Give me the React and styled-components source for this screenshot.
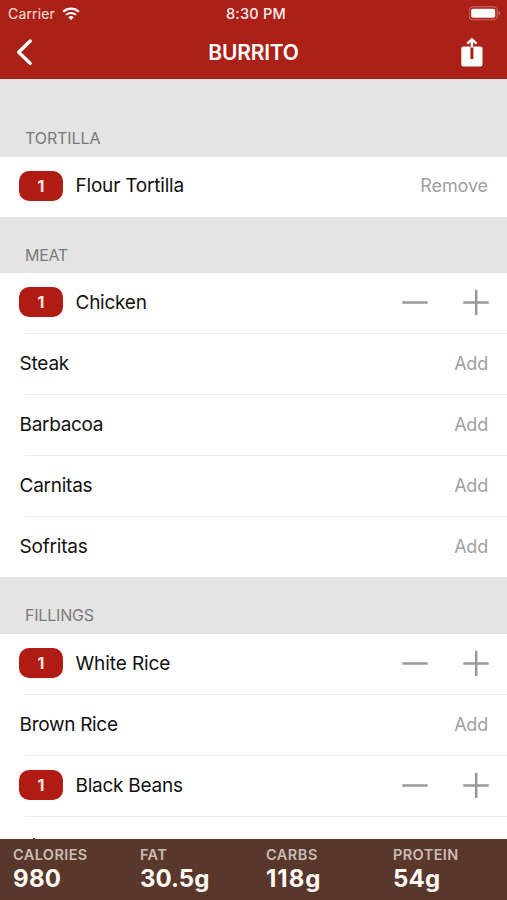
import React, { useState } from "react";
import styled, { createGlobalStyle } from "styled-components";

const GlobalStyle = createGlobalStyle`
  * {
    box-sizing: border-box;
  }
  body {
    margin: 0;
    background-color: #ffffff;
    font-family: Inter, "Liberation Sans", sans-serif;
  }
`;

//
const Screen = styled.div`
  width: 100%;
  height: 100vh;
  display: flex;
  flex-direction: column;
  overflow: hidden;
`;
const Header = styled.header`
  flex: none;
  height: 79px;
  background-color: #ab2118;
  color: #ffffff;
`;
const StatusBar = styled.div`
  height: 27px;
  display: grid;
  grid-template-columns: 1fr auto 1fr;
  align-items: center;
  padding: 0 6px 0 8px;
  font-size: 14px;
  line-height: 27px;
  color: #fbe3dd;
`;
const Carrier = styled.div`
  display: flex;
  align-items: center;
  gap: 7px;
  letter-spacing: 0.15px;
`;
const Clock = styled.div`
  padding-left: 3px;
  font-size: 14.5px;
  font-weight: 500;
  letter-spacing: 0.25px;
  color: #ffeeea;
`;
const Battery = styled.svg`
  justify-self: end;
`;
const NavBar = styled.div`
  height: 52px;
  display: grid;
  grid-template-columns: 1fr auto 1fr;
  align-items: center;
  padding: 0 24px 2px 15px;
`;
const Title = styled.h1`
  margin: 0;
  padding: 1px 0 0 9px;
  font-size: 21px;
  font-weight: 600;
  letter-spacing: -0.2px;
`;
const IconButton = styled.button`
  display: flex;
  padding: 0;
  border: none;
  background: none;
  color: inherit;
  cursor: pointer;
  justify-self: ${(props) => props.$side};
`;
const List = styled.main`
  flex: 1;
  min-height: 0;
  overflow: hidden;
`;
const SectionTitle = styled.h2`
  height: ${(props) => props.$height}px;
  margin: 0;
  padding: 0 25px ${(props) => props.$bottom}px;
  display: flex;
  align-items: flex-end;
  background-color: #e4e4e4;
  color: #7a7a7a;
  font-size: 16px;
  line-height: 20px;
  font-weight: 400;
  letter-spacing: ${(props) => props.$spacing}px;
`;
const Row = styled.div`
  height: ${(props) => (props.$last ? 60 : 61)}px;
  display: flex;
  align-items: center;
  padding: 0 19px ${(props) => props.$bottom}px 20px;
  background: ${(props) =>
    props.$last
      ? "#ffffff"
      : "linear-gradient(#ededed, #ededed) 25px 100% / 100% 1px no-repeat #ffffff"};
`;
const Count = styled.span`
  width: 44px;
  height: 30px;
  margin: 0 13px 0 -1px;
  display: flex;
  align-items: center;
  justify-content: center;
  border-radius: 10px;
  background-color: #b01c14;
  color: #ffe9e2;
  font-size: 16px;
  font-weight: 700;
`;
const Name = styled.span`
  flex: 1;
  margin-left: -0.5px;
  color: #111111;
  font-size: 19px;
  letter-spacing: ${(props) => props.$spacing}px;
`;
const TextButton = styled.button`
  padding: 0;
  border: none;
  background: none;
  color: #a0a0a0;
  font-family: inherit;
  font-size: 18px;
  letter-spacing: ${(props) => props.$spacing}px;
  cursor: pointer;
`;
const Stepper = styled.div`
  display: flex;
  gap: 35px;
  margin-right: -1px;
  color: #989898;
`;
const Totals = styled.footer`
  flex: none;
  height: 61px;
  display: grid;
  grid-template-columns: 127px 126px 127px 1fr;
  padding: 7px 0 0 13px;
  background-color: #59372b;
`;
const TotalLabel = styled.div`
  color: #cbbdb6;
  font-size: 14.5px;
  line-height: 18px;
  font-weight: 600;
  letter-spacing: ${(props) => props.$spacing}px;
`;
const TotalValue = styled.div`
  color: #fffaf5;
  font-size: 24px;
  line-height: 30px;
  font-weight: 700;
  letter-spacing: ${(props) => props.$spacing}px;
`;

//
const WifiIcon = () => (
  <svg width="18" height="14" viewBox="0 0 18 14" fill="none" stroke="#ffffff">
    <path d="M1.2 4.7a11.2 11.2 0 0 1 15.6 0" strokeWidth="2.2" />
    <path d="M4 7.9a7.2 7.2 0 0 1 10 0" strokeWidth="2" />
    <path d="M6.3 10.2a4 4 0 0 1 5.4 0L9 13z" fill="#ffffff" stroke="none" />
  </svg>
);
const BatteryIcon = () => (
  <Battery width="32" height="15" viewBox="0 0 32 15">
    <rect
      x="0.2"
      y="0.8"
      width="28"
      height="13"
      rx="3.8"
      fill="none"
      stroke="#cf6f66"
      strokeWidth="1.1"
    />
    <rect x="2.2" y="2.8" width="24" height="9" rx="1.8" fill="#ffffff" />
    <path d="M29.6 5.2q1.6.7 1.6 2.1t-1.6 2.1z" fill="#cf6f66" />
  </Battery>
);
const BackIcon = () => (
  <svg width="18" height="28" viewBox="0 0 18 28" fill="none">
    <path
      d="M15.2 3 3.7 14.2 15.2 25.4"
      stroke="#ffffff"
      strokeWidth="3.4"
      strokeLinecap="round"
      strokeLinejoin="round"
    />
  </svg>
);
const ShareIcon = () => (
  <svg width="23" height="30" viewBox="0 0 23 30">
    <path
      d="M3.3 9.4H10.4V21.9H13.4V9.4H20.5a2 2 0 0 1 2 2V27.4a2 2 0 0 1-2 2H3.3a2 2 0 0 1-2-2V11.4a2 2 0 0 1 2-2z"
      fill="#ffffff"
    />
    <path
      d="M11.9 10.5V3M7.3 6.6 11.9 2.3 16.5 6.6"
      fill="none"
      stroke="#ffffff"
      strokeWidth="2.4"
    />
  </svg>
);
const MinusIcon = () => (
  <svg width="26" height="26" viewBox="0 0 26 26" stroke="currentColor">
    <path d="M0.3 13.5H25.7" strokeWidth="2.5" />
  </svg>
);
const PlusIcon = () => (
  <svg width="26" height="26" viewBox="0 0 26 26" stroke="currentColor">
    <path d="M0.3 13.5H25.7M13.2 0.7V26" strokeWidth="2.5" />
  </svg>
);

//
const menu = [
  {
    title: "TORTILLA",
    height: 78,
    bottom: 9,
    spacing: -0.1,
    items: [{ name: "Flour Tortilla", spacing: -0.2, bottom: 3 }],
  },
  {
    title: "MEAT",
    height: 56,
    bottom: 8,
    spacing: -0.3,
    items: [
      { name: "Chicken", spacing: -0.25 },
      { name: "Steak", spacing: -0.2 },
      { name: "Barbacoa", spacing: -0.3 },
      { name: "Carnitas", spacing: -0.25 },
      { name: "Sofritas", spacing: -0.2, bottom: 2 },
    ],
  },
  {
    title: "FILLINGS",
    height: 57,
    bottom: 9,
    spacing: -0.2,
    items: [
      { name: "White Rice", spacing: -0.1 },
      { name: "Brown Rice", spacing: -0.3 },
      { name: "Black Beans", spacing: -0.25 },
      { name: "Pinto Beans", spacing: -0.2, bottom: 2 },
    ],
  },
];

const totals = [
  { label: "CALORIES", value: "980", spacing: 0.4, valueSpacing: 0.3 },
  { label: "FAT", value: "30.5g", spacing: 0.4, valueSpacing: 0 },
  { label: "CARBS", value: "118g", spacing: 0.5, valueSpacing: 1 },
  { label: "PROTEIN", value: "54g", spacing: 0.4, valueSpacing: 0.2 },
];

const App = () => {
  const [counts, setCounts] = useState({
    "Flour Tortilla": 1,
    Chicken: 1,
    "White Rice": 1,
    "Black Beans": 1,
  });
  const change = (name, step) => {
    setCounts({ ...counts, [name]: Math.max(0, (counts[name] || 0) + step) });
  };

  const renderAction = (name, single) => {
    if (!counts[name]) {
      return (
        <TextButton $spacing={-0.2} onClick={() => change(name, 1)}>
          Add
        </TextButton>
      );
    }
    if (single) {
      return (
        <TextButton $spacing={-0.1} onClick={() => change(name, -1)}>
          Remove
        </TextButton>
      );
    }
    return (
      <Stepper>
        <IconButton aria-label="Less" onClick={() => change(name, -1)}>
          <MinusIcon />
        </IconButton>
        <IconButton aria-label="More" onClick={() => change(name, 1)}>
          <PlusIcon />
        </IconButton>
      </Stepper>
    );
  };

  return (
    <>
      <GlobalStyle />
      <Screen>
        <Header>
          <StatusBar>
            <Carrier>
              Carrier
              <WifiIcon />
            </Carrier>
            <Clock>8:30 PM</Clock>
            <BatteryIcon />
          </StatusBar>
          <NavBar>
            <IconButton $side="start" aria-label="Back">
              <BackIcon />
            </IconButton>
            <Title>BURRITO</Title>
            <IconButton $side="end" aria-label="Share">
              <ShareIcon />
            </IconButton>
          </NavBar>
        </Header>
        <List>
          {menu.map(({ title, height, bottom, spacing, items }) => (
            <section key={title}>
              <SectionTitle
                $height={height}
                $bottom={bottom}
                $spacing={spacing}>
                {title}
              </SectionTitle>
              {items.map((item, index) => (
                <Row
                  key={item.name}
                  $bottom={item.bottom ?? 3}
                  $last={index === items.length - 1}>
                  {counts[item.name] > 0 && <Count>{counts[item.name]}</Count>}
                  <Name $spacing={item.spacing}>{item.name}</Name>
                  {renderAction(item.name, items.length === 1)}
                </Row>
              ))}
            </section>
          ))}
        </List>
        <Totals>
          {totals.map(({ label, value, spacing, valueSpacing }) => (
            <div key={label}>
              <TotalLabel $spacing={spacing}>{label}</TotalLabel>
              <TotalValue $spacing={valueSpacing}>{value}</TotalValue>
            </div>
          ))}
        </Totals>
      </Screen>
    </>
  );
};

export default App;
